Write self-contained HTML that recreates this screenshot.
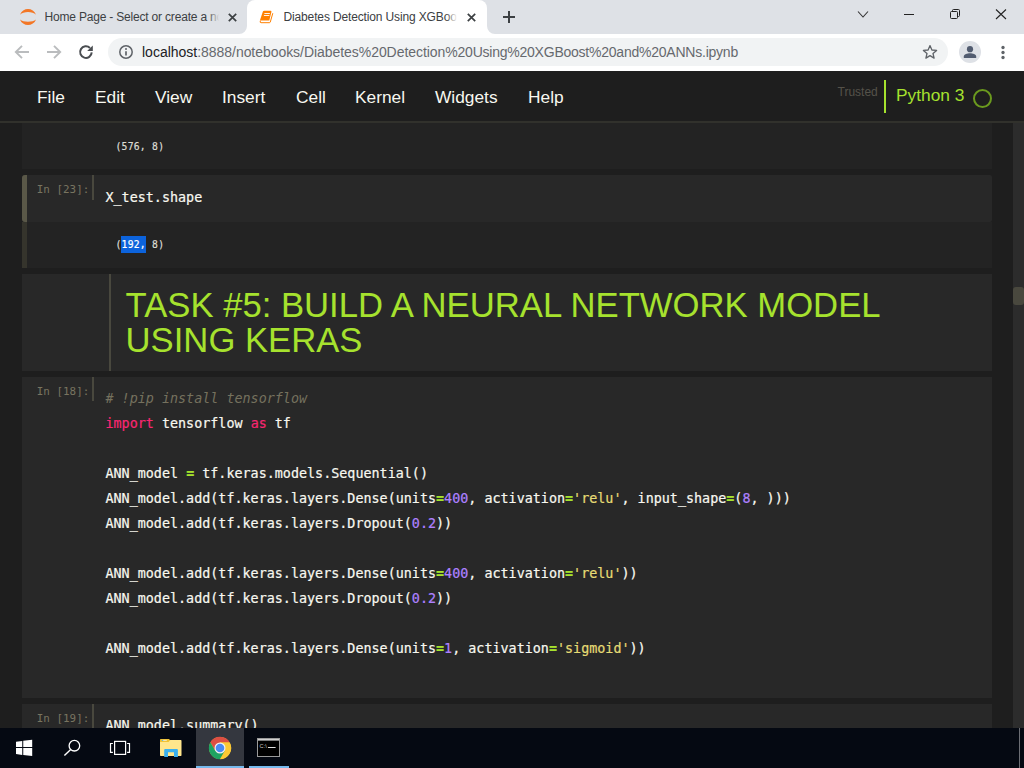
<!DOCTYPE html>
<html lang="en">
<head>
<meta charset="utf-8">
<title>Diabetes Detection Using XGBoost and ANNs</title>
<style>
*{box-sizing:border-box;margin:0;padding:0}
html,body{width:1024px;height:768px;overflow:hidden;background:#1e1e1e}
body{position:relative;font-family:"Liberation Sans",sans-serif}
.abs{position:absolute}
/* ---------- chrome tab strip ---------- */
#tabstrip{left:0;top:0;width:1024px;height:34px;background:#dee1e6}
#toolbar{left:0;top:34px;width:1024px;height:37px;background:#fff}
.tabtitle{top:8px;height:18px;line-height:18px;font-size:12px;color:#3c4043;white-space:nowrap;overflow:hidden}
#activetab{left:247px;top:0;width:240px;height:34px;background:#fff;border-radius:8px 8px 0 0}
#omnibox{left:108px;top:38px;width:840px;height:28px;border-radius:14px;background:#f1f3f4}
#url{left:142px;top:42px;height:20px;line-height:20px;font-size:14px;color:#66696e;white-space:nowrap}
#url b{font-weight:normal;color:#202124}
/* ---------- jupyter header ---------- */
#jhead{left:0;top:71px;width:1024px;height:52px;background:#1e1e1e;border-bottom:2px solid #31312c}
.menu{top:86px;height:22px;line-height:22px;font-size:17.33px;color:#f8f8f0;white-space:nowrap}
#trusted{left:837.5px;top:85px;font-size:12px;line-height:14px;color:#55524a}
#kbar{left:884px;top:80px;width:2px;height:33px;background:#a6e22e}
#kname{left:896px;top:84px;font-size:17.33px;line-height:22px;color:#a6e22e;white-space:nowrap}
#kcirc{left:973px;top:89px;width:19px;height:19px;border:2px solid #6b9a1e;border-radius:50%}
/* ---------- notebook ---------- */
.cellbg{left:22px;width:970px}
.in{background:#282828}
.out{background:#232323}
.prompt{font-family:"DejaVu Sans Mono","Liberation Mono",monospace;font-size:10.9px;line-height:14px;color:#787460;white-space:pre}
.vline{width:2px;background:#49483e}
.code{font-family:"DejaVu Sans Mono","Liberation Mono",monospace;font-size:13.4px;line-height:25px;color:#f8f8f0;white-space:pre;left:105.5px;-webkit-text-stroke:0.2px}
.code .k{color:#f92672}
.code .n{color:#ae81ff}
.code .s{color:#e6db74}
.code .o{color:#a6e22e;font-weight:bold}
.code .c{color:#75715e;font-style:italic;-webkit-text-stroke:0}
.otext{font-family:"DejaVu Sans Mono","Liberation Mono",monospace;font-size:9.7px;letter-spacing:0.26px;line-height:17px;color:#dcdcd4;-webkit-text-stroke:0.2px;white-space:pre;left:115.5px}
.otext .sel{background:#0c63dc;color:#fff;display:inline-block;height:17px;line-height:17px;vertical-align:top;margin-left:-0.6px;padding-left:0.6px}
h1{font-weight:normal;font-size:34.67px;line-height:35px;color:#a6e22e;left:125.6px;top:288px;width:840px}
h1 span{display:block;white-space:nowrap}
/* ---------- scrollbar ---------- */
#sbtrack{left:1013px;top:123px;width:11px;height:605px;background:#2c2c2c}
#sbthumb{left:1013px;top:287px;width:11px;height:18px;background:#49483e;border-radius:3px}
/* ---------- taskbar ---------- */
#taskbar{left:0;top:728px;width:1024px;height:40px;background:#050912}
</style>
</head>
<body>

<!-- ================= Chrome tab strip ================= -->
<div id="tabstrip" class="abs"></div>
<div id="activetab" class="abs"></div>
<svg class="abs" style="left:239px;top:26px" width="8" height="8"><path d="M8 0 V8 H0 A8 8 0 0 0 8 0Z" fill="#fff"/></svg>
<svg class="abs" style="left:487px;top:26px" width="8" height="8"><path d="M0 0 V8 H8 A8 8 0 0 1 0 0Z" fill="#fff"/></svg>

<!-- jupyter favicon -->
<svg class="abs" style="left:20px;top:8px" width="16" height="18" viewBox="0 0 16 18">
  <path d="M0 6.7 C2.6 -0.8 13.4 -0.8 16 6.7 C12.6 3.2 3.4 3.2 0 6.7Z" fill="#f37726"/>
  <path d="M0 11.4 C2.6 18.7 13.4 18.7 16 11.4 C12.6 14.4 3.4 14.4 0 11.4Z" fill="#f37726"/>
</svg>
<div class="abs tabtitle" style="left:44.5px;width:176px;font-size:12px;letter-spacing:-0.19px">Home Page - Select or create a notebook</div>
<div class="abs" style="left:208px;top:6px;width:14px;height:22px;background:linear-gradient(90deg,rgba(222,225,230,0),#dee1e6 80%)"></div>
<svg class="abs" style="left:228px;top:13px" width="9" height="9" viewBox="0 0 9 9"><path d="M0.8 0.8 L8.2 8.2 M8.2 0.8 L0.8 8.2" stroke="#3c4043" stroke-width="1.7" fill="none"/></svg>

<!-- book favicon -->
<svg class="abs" style="left:259px;top:10px" width="16" height="14" viewBox="0 0 16 14">
  <path d="M5.2 0.8 H11.6 Q12.7 0.8 12.4 1.9 L10.3 10.4 H1.3 Q1 10.4 1.2 9.6 L3.9 1.6 Q4.2 0.8 5.2 0.8Z" fill="#ff8000"/>
  <path d="M1.4 10.6 Q0.6 12.7 2 12.7 H10.4 Q11.1 12.7 11.3 12 L13.8 3.2" fill="none" stroke="#ff8000" stroke-width="1"/>
  <path d="M5.4 3.5 H10.9 M4.9 5.5 H10.4" stroke="#fff" stroke-width="0.9"/>
</svg>
<div class="abs tabtitle" style="left:283.5px;width:176px;font-size:12px;letter-spacing:-0.14px">Diabetes Detection Using XGBoost and ANNs</div>
<div class="abs" style="left:446px;top:6px;width:14px;height:22px;background:linear-gradient(90deg,rgba(255,255,255,0),#fff 80%)"></div>
<svg class="abs" style="left:466.5px;top:13px" width="9" height="9" viewBox="0 0 9 9"><path d="M0.8 0.8 L8.2 8.2 M8.2 0.8 L0.8 8.2" stroke="#3c4043" stroke-width="1.7" fill="none"/></svg>
<!-- new tab plus -->
<svg class="abs" style="left:503px;top:11px" width="12" height="12" viewBox="0 0 12 12"><path d="M6 0 V12 M0 6 H12" stroke="#3c4043" stroke-width="2" fill="none"/></svg>

<!-- window controls -->
<svg class="abs" style="left:857px;top:10px" width="12" height="9" viewBox="0 0 12 9"><path d="M1 1.5 L6 7 L11 1.5" stroke="#333" stroke-width="1.1" fill="none"/></svg>
<div class="abs" style="left:904px;top:14px;width:10px;height:1px;background:#222"></div>
<svg class="abs" style="left:949px;top:8px" width="12" height="12" viewBox="0 0 12 12">
  <rect x="1.5" y="3.5" width="7" height="7" rx="1" fill="none" stroke="#222" stroke-width="1"/>
  <path d="M3.5 3.5 V2.5 A1 1 0 0 1 4.5 1.5 H9.5 A1 1 0 0 1 10.5 2.5 V7.5 A1 1 0 0 1 9.5 8.5 H8.5" fill="none" stroke="#222" stroke-width="1"/>
</svg>
<svg class="abs" style="left:995px;top:9px" width="12" height="11" viewBox="0 0 12 11"><path d="M1 0.5 L11 10 M11 0.5 L1 10" stroke="#222" stroke-width="1.1" fill="none"/></svg>

<!-- ================= Chrome toolbar ================= -->
<div id="toolbar" class="abs"></div>
<svg class="abs" style="left:14px;top:44px" width="16" height="16" viewBox="0 0 16 16"><path d="M15 8 H2.5 M8 1.8 L1.8 8 L8 14.2" stroke="#babcbe" stroke-width="1.9" fill="none"/></svg>
<svg class="abs" style="left:46px;top:44px" width="16" height="16" viewBox="0 0 16 16"><path d="M1 8 H13.5 M8 1.8 L14.2 8 L8 14.2" stroke="#babcbe" stroke-width="1.9" fill="none"/></svg>
<svg class="abs" style="left:78px;top:44px" width="16" height="16" viewBox="0 0 16 16">
  <path d="M13.7 8.4 A5.8 5.8 0 1 1 12 4" stroke="#4a4d51" stroke-width="2" fill="none"/>
  <path d="M14.8 1.4 V7 H9.2 Z" fill="#4a4d51"/>
</svg>
<div id="omnibox" class="abs"></div>
<svg class="abs" style="left:118px;top:44px" width="16" height="16" viewBox="0 0 16 16">
  <circle cx="8" cy="8" r="6.2" stroke="#5f6368" stroke-width="1.5" fill="none"/>
  <path d="M8 7.2 V11.4" stroke="#5f6368" stroke-width="1.7"/><circle cx="8" cy="5" r="1" fill="#5f6368"/>
</svg>
<div id="url" class="abs"><b>localhost</b><span style="letter-spacing:-0.05px">:8888/notebooks/Diabetes%20Detection</span><span style="letter-spacing:-0.23px">%20Using%20XGBoost%20and%20ANNs.ipynb</span></div>
<svg class="abs" style="left:922px;top:44px" width="16" height="16" viewBox="0 0 16 16"><path d="M8 1.6 L9.9 6 L14.6 6.4 L11 9.5 L12.1 14.1 L8 11.6 L3.9 14.1 L5 9.5 L1.4 6.4 L6.1 6 Z" stroke="#5f6368" stroke-width="1.3" fill="none" stroke-linejoin="round"/></svg>
<div class="abs" style="left:959px;top:41px;width:22px;height:22px;border-radius:50%;background:#dee1e6"></div>
<svg class="abs" style="left:959px;top:41px" width="22" height="22" viewBox="0 0 22 22"><circle cx="11" cy="8.2" r="3.1" fill="#525c70"/><path d="M4.8 17 V15.6 C4.8 13 8.4 12.2 11 12.2 C13.6 12.2 17.2 13 17.2 15.6 V17 Z" fill="#525c70"/></svg>
<svg class="abs" style="left:999.6px;top:44px" width="6" height="16" viewBox="0 0 6 16"><circle cx="3" cy="3.5" r="1.65" fill="#5f6368"/><circle cx="3" cy="8.5" r="1.65" fill="#5f6368"/><circle cx="3" cy="13.5" r="1.65" fill="#5f6368"/></svg>

<!-- ================= Jupyter header ================= -->
<div id="jhead" class="abs"></div>
<div class="abs menu" style="left:37px">File</div>
<div class="abs menu" style="left:95px">Edit</div>
<div class="abs menu" style="left:155px">View</div>
<div class="abs menu" style="left:222px">Insert</div>
<div class="abs menu" style="left:296px">Cell</div>
<div class="abs menu" style="left:355px">Kernel</div>
<div class="abs menu" style="left:435px">Widgets</div>
<div class="abs menu" style="left:528px">Help</div>
<div id="trusted" class="abs">Trusted</div>
<div id="kbar" class="abs"></div>
<div id="kname" class="abs">Python 3</div>
<div id="kcirc" class="abs"></div>

<!-- ================= Notebook cells ================= -->
<!-- output of previous cell -->
<div class="abs cellbg out" style="top:123px;height:46px"></div>
<div class="abs otext" style="top:138px">(576, 8)</div>

<!-- In [23] -->
<div class="abs cellbg in" style="top:175px;height:47px;border-radius:3px 2px 2px 3px"></div>
<div class="abs cellbg out" style="top:222px;height:46px"></div>
<div class="abs" style="left:22px;top:175px;width:5px;height:47px;background:#5a5848;border-radius:3px 0 0 3px"></div>
<div class="abs" style="left:22px;top:222px;width:5px;height:46px;background:#35342c"></div>
<div class="abs prompt" style="left:36.8px;top:183px">In [23]:</div>
<div class="abs vline" style="left:92px;top:175px;height:25px"></div>
<div class="abs code" style="top:185px">X_test.shape</div>
<div class="abs otext" style="top:236px">(<span class="sel">192,</span> 8)</div>

<!-- markdown heading -->
<div class="abs cellbg in" style="top:274px;height:97px"></div>
<div class="abs vline" style="left:109px;top:274px;height:97px"></div>
<h1 class="abs"><span>TASK #5: BUILD A NEURAL NETWORK MODEL</span><span>USING KERAS</span></h1>

<!-- In [18] -->
<div class="abs cellbg in" style="top:377px;height:321px"></div>
<div class="abs prompt" style="left:36.8px;top:385px">In [18]:</div>
<div class="abs vline" style="left:92px;top:377px;height:24px"></div>
<div class="abs code" style="top:386px"><span class="c"># !pip install tensorflow</span>
<span class="k">import</span> tensorflow <span class="k">as</span> tf

ANN_model <span class="o">=</span> tf.keras.models.Sequential()
ANN_model.add(tf.keras.layers.Dense(units<span class="o">=</span><span class="n">400</span>, activation<span class="o">=</span><span class="s">'relu'</span>, input_shape<span class="o">=</span>(<span class="n">8</span>, )))
ANN_model.add(tf.keras.layers.Dropout(<span class="n">0.2</span>))

ANN_model.add(tf.keras.layers.Dense(units<span class="o">=</span><span class="n">400</span>, activation<span class="o">=</span><span class="s">'relu'</span>))
ANN_model.add(tf.keras.layers.Dropout(<span class="n">0.2</span>))

ANN_model.add(tf.keras.layers.Dense(units<span class="o">=</span><span class="n">1</span>, activation<span class="o">=</span><span class="s">'sigmoid'</span>))</div>

<!-- In [19] -->
<div class="abs cellbg in" style="top:704px;height:24px"></div>
<div class="abs prompt" style="left:36.8px;top:712px">In [19]:</div>
<div class="abs vline" style="left:92px;top:704px;height:24px"></div>
<div class="abs code" style="top:713px">ANN_model.summary()</div>

<!-- scrollbar -->
<div id="sbtrack" class="abs"></div>
<div id="sbthumb" class="abs"></div>

<!-- ================= Windows taskbar ================= -->
<div id="taskbar" class="abs"></div>
<div class="abs" style="left:1019px;top:728px;width:1px;height:40px;background:#6c6e74"></div>
<!-- start button -->
<svg class="abs" style="left:15.8px;top:739px" width="17" height="18" viewBox="0 0 17 18">
  <path d="M0 2.8 L6.25 1.9 V8.05 H0 Z M7.25 1.75 L16.2 0.8 V8.05 H7.25 Z M0 8.95 H6.25 V16 L0 15.1 Z M7.25 8.95 H16.2 V17 L7.25 16.1 Z" fill="#fff"/>
</svg>
<!-- search -->
<svg class="abs" style="left:62px;top:738px" width="20" height="20" viewBox="0 0 20 20">
  <circle cx="12.4" cy="7.7" r="5.3" stroke="#fff" stroke-width="1.3" fill="none"/>
  <path d="M8.7 11.5 L2.4 17.6" stroke="#fff" stroke-width="1.4"/>
</svg>
<!-- task view -->
<svg class="abs" style="left:109px;top:739px" width="22" height="18" viewBox="0 0 22 18">
  <rect x="5.6" y="2.4" width="11" height="13" stroke="#fff" stroke-width="1.2" fill="none"/>
  <path d="M3.9 4.5 H1.5 V13.3 H3.9 M18.1 4.5 H20.5 V13.3 H18.1" stroke="#fff" stroke-width="1.2" fill="none"/>
</svg>
<!-- file explorer -->
<svg class="abs" style="left:160px;top:738px" width="22" height="20" viewBox="0 0 22 20">
  <path d="M0 1.8 A0.8 0.8 0 0 1 0.8 1 H9 L10.2 2.2 V5 H0 Z" fill="#f0c233"/>
  <path d="M0 4 L8.6 4 L10.2 2 H20.8 A0.7 0.7 0 0 1 21.5 2.7 V17.2 A0.7 0.7 0 0 1 20.8 17.9 H0.7 A0.7 0.7 0 0 1 0 17.2 Z" fill="#ffe68c"/>
  <rect x="2.2" y="1.9" width="4.6" height="1" fill="#f7ecc0"/>
  <rect x="2" y="1.9" width="1.2" height="1" fill="#4fb4e6"/>
  <path d="M4.2 19 V12 A1 1 0 0 1 5.2 11 H16.9 A1 1 0 0 1 17.9 12 V19 H14 V14.2 H8 V19 Z" fill="#3bb0ee"/>
</svg>
<!-- chrome (active) -->
<div class="abs" style="left:196px;top:728px;width:48px;height:40px;background:#34373f"></div>
<div class="abs" style="left:196px;top:766px;width:48px;height:2px;background:#76b9ed"></div>
<svg class="abs" style="left:208px;top:736px" width="24" height="24" viewBox="-12 -12 24 24">
  <circle r="11" fill="#fcc934"/>
  <path d="M-4.76 2.75 L-9.64 -5.7 A11.2 11.2 0 0 1 9.76 -5.5 L0 -5.5 Z" fill="#dd4f43"/>
  <path d="M0 -5.5 L9.76 -5.5 A11.2 11.2 0 0 1 -0.12 11.2 L4.76 2.75 Z" fill="#fcc934"/>
  <path d="M4.76 2.75 L-0.12 11.2 A11.2 11.2 0 0 1 -9.64 -5.7 L-4.76 2.75 Z" fill="#1ea362"/>
  <circle r="5.5" fill="#f1f1f1"/>
  <circle r="4.3" fill="#4a8af4"/>
</svg>
<!-- cmd -->
<div class="abs" style="left:249px;top:766px;width:40px;height:2px;background:#76b9ed"></div>
<svg class="abs" style="left:257px;top:738px" width="23" height="19" viewBox="0 0 23 19">
  <rect x="0.5" y="0.5" width="22" height="18" fill="#000" stroke="#9a9a9a" stroke-width="1"/>
  <rect x="1" y="1" width="21" height="1.6" fill="#d0d0d0"/>
  <text x="2.6" y="9.6" font-family="Liberation Sans, sans-serif" font-size="5.6" fill="#c8c8c8">C:\</text>
  <rect x="11" y="9" width="7.6" height="1" fill="#e0e0e0"/>
</svg>

</body>
</html>
